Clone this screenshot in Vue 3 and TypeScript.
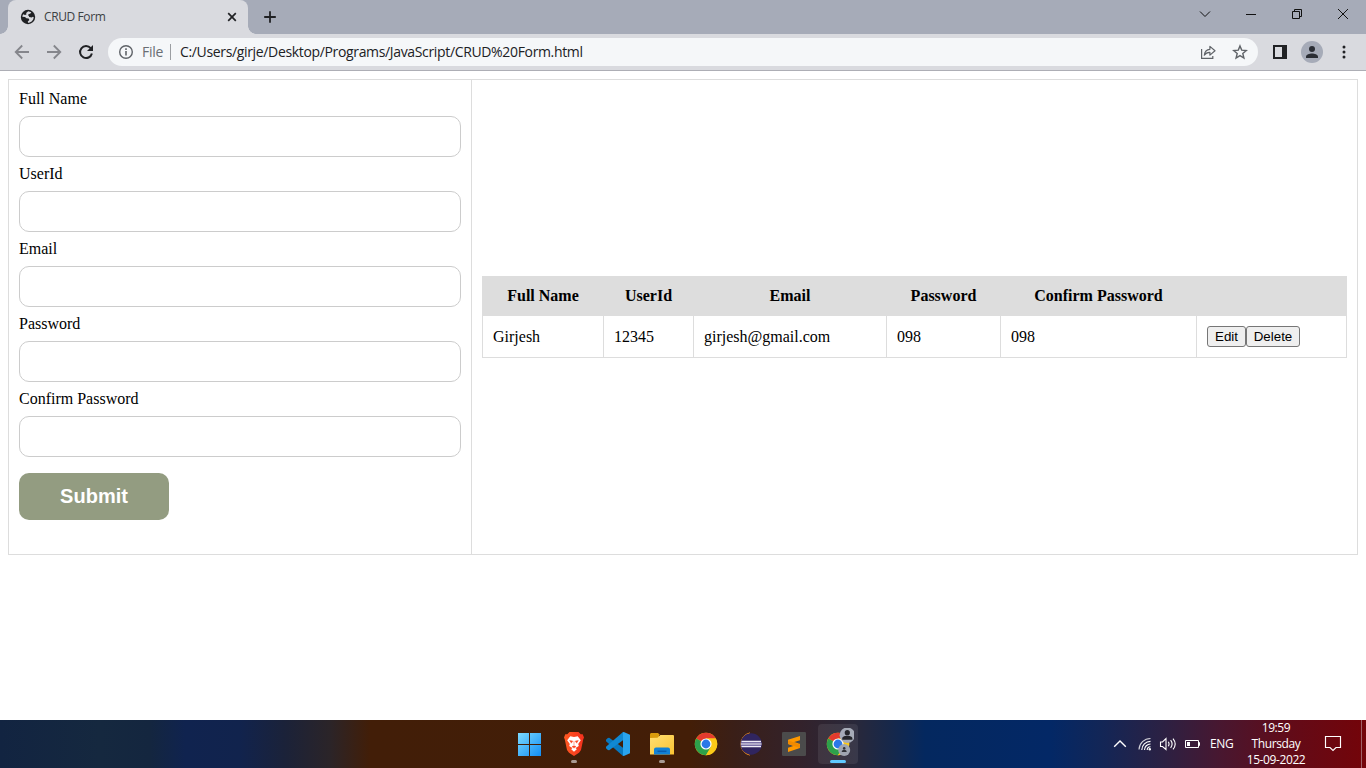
<script setup lang="ts">
interface Field { id: string; label: string; key: keyof Person }
interface Person { fullName: string; userId: string; email: string; password: string; confirm: string }

const fields: Field[] = [
  { id: 'full-name', label: 'Full Name', key: 'fullName' },
  { id: 'user-id', label: 'UserId', key: 'userId' },
  { id: 'email', label: 'Email', key: 'email' },
  { id: 'password', label: 'Password', key: 'password' },
  { id: 'confirm', label: 'Confirm Password', key: 'confirm' },
]
const people: Person[] = [
  { fullName: 'Girjesh', userId: '12345', email: 'girjesh@gmail.com', password: '098', confirm: '098' },
]
</script>

<template>
  <div class="screen">
    <header class="tabs">
      <div class="tab">
        <svg class="favicon" width="16" height="16" viewBox="0 0 16 16">
          <circle cx="8" cy="8" r="7.200" fill="#202124" />
          <path d="M8.200 2.300L11.300 3.200 10.400 4.800 8.800 5 8.200 6.600 9.800 7.600 12 7 13.700 8.200C13.500 11.200 11 13.700 8 13.700L7.800 12.600 9.400 11 8.600 9.600 6.400 9.300 5 8 2.300 7.800C2.400 6.800 2.700 5.900 3.200 5.200L5 6 6.400 5.400 6.200 4Z" fill="#d9dadf" />
          <path d="M8.600 5.200l2.800-.6 2 2.600-1.600 1.200-2.600-.4Z" fill="#202124" />
        </svg>
        <span class="tab-title">CRUD Form</span>
        <svg width="16" height="16" viewBox="0 0 16 16" fill="none" stroke="#202124" stroke-width="1.700"><path d="M4.200 4.200l7.600 7.600M11.800 4.200l-7.600 7.600" /></svg>
      </div>
      <svg class="plus" width="16" height="16" viewBox="0 0 16 16" fill="none" stroke="#202124" stroke-width="1.800"><path d="M8 2.200v11.600M2.200 8h11.600" /></svg>
      <div class="window-controls">
        <span><svg width="12" height="12" viewBox="0 0 12 12"><path d="M1 3.500l5 5 5-5" /></svg></span>
        <span><svg width="12" height="12" viewBox="0 0 12 12"><path d="M1 6.500h10" /></svg></span>
        <span><svg width="12" height="12" viewBox="0 0 12 12"><path d="M1.500 3.500h7v7h-7zM3.500 3.500v-2h7v7h-2" /></svg></span>
        <span><svg width="12" height="12" viewBox="0 0 12 12"><path d="M1 1l10 10M11 1L1 11" /></svg></span>
      </div>
    </header>

    <nav class="toolbar">
      <svg width="16" height="16" viewBox="0 0 16 16" fill="none" stroke="#85868c" stroke-width="1.800"><path d="M15 8H2M8.200 1.500L1.700 8l6.500 6.500" /></svg>
      <svg width="16" height="16" viewBox="0 0 16 16" fill="none" stroke="#85868c" stroke-width="1.800"><path d="M1 8h13M7.800 1.500L14.300 8l-6.500 6.500" /></svg>
      <svg width="16" height="16" viewBox="0 0 16 16"><path d="M12.700 4.200A6 6 0 1 0 13.900 9.500" fill="none" stroke="#202124" stroke-width="2" /><path d="M15 1v6H9Z" fill="#202124" /></svg>
      <div class="address">
        <svg width="16" height="16" viewBox="0 0 16 16"><circle cx="8" cy="8" r="6.300" fill="none" stroke="#5f6368" stroke-width="1.400" /><path d="M7.200 7h1.600v4.500H7.200zM7.200 4.300h1.600v1.600H7.200z" fill="#5f6368" /></svg>
        <span class="scheme">File</span>
        <i class="rule"></i>
        <span class="url">C:/Users/girje/Desktop/Programs/JavaScript/CRUD%20Form.html</span>
        <svg class="share" width="16" height="16" viewBox="0 0 16 16" fill="none" stroke="#5f6368" stroke-width="1.200"><path d="M1.600 5v9.400h11.200v-2.500" /><path d="M4.300 11.200C4.700 7.700 6.700 5.500 9.900 5.300V2.400L15 6.800l-5.100 4.300V8.300C7.600 8.200 5.700 9.100 4.300 11.200Z" stroke-linejoin="round" /></svg>
        <svg width="16" height="16" viewBox="0 0 16 16" fill="none" stroke="#5f6368" stroke-width="1.400"><path d="M8 1.900l1.700 4.200 4.600.4-3.500 3 1.100 4.500L8 11.600 4.100 14l1.100-4.500-3.500-3 4.600-.4Z" /></svg>
      </div>
      <svg class="panel-icon" width="16" height="16" viewBox="0 0 16 16"><path d="M1 1h14v14H1zM3 3v10h7V3z" fill="#202124" fill-rule="evenodd" /></svg>
      <svg class="avatar" width="22" height="22" viewBox="0 0 22 22"><circle cx="11" cy="11" r="11" fill="#a6abb8" /><circle cx="11" cy="8" r="3" fill="#2b2e35" /><path d="M5 17v-1.400c0-2.200 3.500-3.200 6-3.200s6 1 6 3.200V17Z" fill="#2b2e35" /></svg>
      <svg class="dots" width="4" height="16" viewBox="0 0 4 16" fill="#202124"><circle cx="2" cy="3" r="1.500" /><circle cx="2" cy="8" r="1.500" /><circle cx="2" cy="13" r="1.500" /></svg>
    </nav>

    <main class="page">
      <form class="entry" @submit.prevent>
        <template v-for="f in fields" :key="f.id">
          <label :for="f.id">{{ f.label }}</label>
          <input :id="f.id" type="text" />
        </template>
        <button class="submit" type="submit">Submit</button>
      </form>
      <section class="records">
        <table>
          <colgroup><col class="c1" /><col class="c2" /><col class="c3" /><col class="c4" /><col class="c5" /><col class="c6" /></colgroup>
          <thead><tr><th v-for="f in fields" :key="f.id">{{ f.label }}</th><th></th></tr></thead>
          <tbody>
            <tr v-for="p in people" :key="p.userId">
              <td v-for="f in fields" :key="f.id">{{ p[f.key] }}</td>
              <td><div class="actions"><button class="edit">Edit</button><button class="delete">Delete</button></div></td>
            </tr>
          </tbody>
        </table>
      </section>
    </main>

    <footer class="taskbar">
      <div class="apps">
        <span class="app">
          <svg width="24" height="24" viewBox="0 0 24 24">
            <defs><linearGradient id="win" x1="0" y1="0" x2="24" y2="24" gradientUnits="userSpaceOnUse"><stop offset="0" stop-color="#7fdcff" /><stop offset="1" stop-color="#0f8cf4" /></linearGradient></defs>
            <path d="M0 1h11v11H0zM12 1h11v11H12zM0 13h11v11H0zM12 13h11v11H12z" fill="url(#win)" />
          </svg>
        </span>
        <span class="app open">
          <svg width="24" height="24" viewBox="0 0 24 24">
            <defs><linearGradient id="lion" x1="0" x2="1"><stop offset="0" stop-color="#ff5a22" /><stop offset="1" stop-color="#f5301d" /></linearGradient></defs>
            <path d="M7.500 0h9l2.200 2.300 2-.1L22 5.500l-.8 2L19 18l-2 2.700-5 3.200-5-3.200L5 18 2.800 7.500 2 5.500l1.300-3.300 2 .1Z" fill="url(#lion)" />
            <path d="M8.300 4.300l3.700.6 3.700-.6 3.100 3.900-2.600 3.900.6 2-3.200 2 1.200 1.200L12 19.800l-2.800-2.500 1.200-1.200-3.200-2 .6-2-2.600-3.900Z" fill="#fff" />
            <path d="M7.500 8.600l3.200.5-1.500 2.200M16.500 8.600l-3.200.5 1.500 2.200M12 9v4M10 14.600l2-.8 2 .8-2 1.500Z" fill="#fb4825" stroke="#fb4825" stroke-width=".5" />
          </svg>
        </span>
        <span class="app">
          <svg width="24" height="24" viewBox="0 0 24 24">
            <path d="M1.800 6L0 7.800v1.400l17 14.700 1-.2v-7.200L3.200 5.800Z" fill="#0878bf" />
            <path d="M1.800 18L0 16.200v-1.400L17 .1l1 .2v7.200L3.200 18.200Z" fill="#1088d2" />
            <path d="M17.800 0L24 2.800v18.400L17.800 24c-.7 0-.8-.4-.8-.9V.9c0-.5.200-.9.800-.9Z" fill="#29a4ee" />
          </svg>
        </span>
        <span class="app open">
          <svg width="24" height="24" viewBox="0 0 24 24">
            <defs><linearGradient id="fold" x1="0" y1="0" x2="1" y2="1"><stop offset="0" stop-color="#ffdf73" /><stop offset="1" stop-color="#fac332" /></linearGradient></defs>
            <path d="M0 2.500c0-.8.600-1.500 1.500-1.500H8l2 2h-1v3H0Z" fill="#d89b0c" />
            <path d="M0 6l7.500-.2L10.300 3H23a1 1 0 0 1 1 1v18.500H0Z" fill="url(#fold)" />
            <path d="M4 22.500v-5a2 2 0 0 1 2-2h12a2 2 0 0 1 2 2v5Z" fill="#1181d5" /><path d="M7.500 19.300h9" stroke="#075cae" stroke-width="1.500" />
          </svg>
        </span>
        <span class="app">
          <svg width="24" height="24" viewBox="0 0 24 24">
            <g id="browser-mark">
              <circle cx="12" cy="12" r="11.200" fill="#fbc918" />
              <path d="M12 12L2.300 6.400A11.200 11.200 0 0 1 21.700 6.400L12 6.400Z" fill="#e33b2e" />
              <path d="M12 12L2.300 6.400A11.200 11.200 0 0 0 12 23.200L17 14.800Z" fill="#2da14b" />
              <path d="M12 12V6.400H21.700A11.200 11.200 0 0 1 12 23.200L17 14.800Z" fill="#fbc918" />
              <circle cx="12" cy="12" r="5.600" fill="#fff" /><circle cx="12" cy="12" r="4.400" fill="#2b78e8" />
            </g>
          </svg>
        </span>
        <span class="app">
          <svg width="24" height="24" viewBox="0 0 24 24">
            <path d="M11.500 1A11.300 11.300 0 0 0 11.500 23 14 14 0 0 1 11.500 1Z" fill="#f79318" stroke="#f79318" />
            <circle cx="13.200" cy="12" r="10.700" fill="#30255f" />
            <path d="M3.400 9.500h19.600M2.900 12h20.600M3.400 14.500h19.600" stroke="#f0edf7" stroke-width="1.400" /><path d="M3.100 10.750h20.200M3.100 13.250h20.200" stroke="#857bb3" stroke-width="1.100" />
          </svg>
        </span>
        <span class="app">
          <svg width="24" height="24" viewBox="0 0 24 24">
            <rect width="24" height="24" rx="1.300" fill="#4b4b4b" />
            <path d="M18 4v4.200L6 12V7.800ZM6 7.800L18 12v4.200L6 12ZM18 11.700V16L6 20v-4.200Z" fill="#ff9800" /><path d="M6 8.200v3.700l12 4.100v-3.500l-6.500-2.200" fill="#f18a00" />
          </svg>
        </span>
        <span class="app active">
          <svg width="32" height="32" viewBox="0 0 32 32">
            <use href="#browser-mark" x="4" y="4" />
            <circle cx="25.300" cy="7.200" r="7.700" fill="#a6abb8" /><circle cx="25.300" cy="4.700" r="2.600" fill="#25262b" /><path d="M20.200 11.800V10.400c0-1.900 2.800-2.700 5.100-2.700s5.100.8 5.100 2.700v1.400Z" fill="#25262b" />
            <circle cx="22.200" cy="22" r="6" fill="#9fa5b1" /><circle cx="22.200" cy="20.400" r="1.300" fill="#303238" /><path d="M19.800 24v-.8c0-.8 1.200-1.200 2.400-1.200s2.400.4 2.400 1.200v.8Z" fill="#303238" />
          </svg>
        </span>
      </div>

      <div class="tray">
        <svg class="up" width="14" height="14" viewBox="0 0 14 14" fill="none" stroke="#fff" stroke-width="1.400"><path d="M1.200 9.800L7 4l5.800 5.800" /></svg>
        <svg class="wifi" width="14" height="14" viewBox="0 0 14 14" fill="none" stroke="#fff" stroke-width="1.150"><path d="M1 12.500A11.500 11.500 0 0 1 12.500 1.500" opacity=".8" /><path d="M3.800 13A8.700 8.700 0 0 1 12.500 4.300M6.500 13A6 6 0 0 1 12.500 7M9.200 13A3.300 3.300 0 0 1 12.500 9.700" /><circle cx="11.800" cy="12.300" r="1.200" fill="#fff" stroke="none" /></svg>
        <svg class="sound" width="18" height="14" viewBox="0 0 18 14" fill="none" stroke="#fff" stroke-width="1.100"><path d="M1.500 5h2L7 1.500v11L3.500 9.500h-2ZM9.300 4.800q1.500 2.200 0 4.400M11.600 3.200q3 3.800 0 7.600M14 1.600q4.400 5.400 0 10.800" /></svg>
        <svg class="battery" width="16" height="10" viewBox="0 0 16 10"><path d="M.5 1.500h13v7H.5ZM13.500 3.500h1v3h-1" fill="none" stroke="#fff" /><path d="M2 3h3v4H2z" fill="#fff" /></svg>
        <span class="lang">ENG</span>
        <div class="clock"><span>19:59</span><span>Thursday</span><span>15-09-2022</span></div>
        <svg class="note" width="18" height="18" viewBox="0 0 18 18" fill="none" stroke="#fff" stroke-width="1.150"><path d="M1.500 1.500h15v11h-4.500l-3 3-3-3H1.500Z" /></svg>
        <i class="edge"></i>
      </div>
    </footer>
  </div>
</template>

<style>
body { margin: 0; background: #fff; }
</style>

<style scoped>
* { box-sizing: border-box; }
svg { display: block; flex: none; }
.screen { width: 1366px; height: 768px; display: flex; flex-direction: column; overflow: hidden; background: #fff; font: 12px/16px "Open Sans", "Noto Sans", sans-serif; }

.tabs { height: 34px; display: flex; background: #a6abb8; padding-left: 8px; flex: none; }
.tab { position: relative; width: 240px; display: flex; align-items: center; background: #d9dadf; border-radius: 8px 8px 0 0; padding: 0 8px 0 12px; color: #3c4043; }
.tab::before, .tab::after { content: ""; position: absolute; bottom: 0; width: 8px; height: 8px; }
.tab::before { left: -8px; background: radial-gradient(circle at 0 0, #a6abb8 7.500px, #d9dadf 8px); }
.tab::after { right: -8px; background: radial-gradient(circle at 100% 0, #a6abb8 7.500px, #d9dadf 8px); }
.tab-title { flex: 1; margin-left: 8px; letter-spacing: -.4px; }
.plus { margin: 9px 0 0 14px; }
.window-controls { display: flex; margin-left: auto; height: 28px; }
.window-controls span { width: 46px; display: grid; place-items: center; }
.window-controls svg { fill: none; stroke: #111; stroke-width: 1; }

.toolbar { height: 37px; display: flex; align-items: center; flex: none; padding: 0 0 0 14px; background: #d9dadf; border-bottom: 1px solid #adaeb5; gap: 16px; }
.address { width: 1150px; height: 28px; margin-left: -2px; border-radius: 14px; padding: 0 10px; display: flex; align-items: center; background: #f5f7f9; font-size: 14px; }
.scheme { width: 28px; margin-left: 8px; color: #6a6e73; letter-spacing: -.3px; }
.rule { width: 1px; height: 16px; background: #9b9ea2; }
.url { margin-left: 9px; color: #202124; white-space: nowrap; letter-spacing: -.345px; }
.share { margin: 0 16px 0 auto; }
.panel-icon { margin-left: -2px; }
.avatar { margin-left: -3px; }
.dots { margin-left: 3px; }

.page { height: 476px; display: grid; grid-template-columns: 463px 1fr; margin: 8px 8px 0; border: 1px solid #ddd; font: 16px/18px "Liberation Serif", "Times New Roman", serif; flex: none; color: #000; }
.entry { display: flex; flex-direction: column; padding: 10px; border-right: 1px solid #ddd; }
.entry label { height: 18px; }
.entry input { width: 442px; height: 41px; margin: 8px 0; border: 1px solid #ccc; border-radius: 10px; outline: none; background: #fff; }
.submit { width: 150px; height: 47px; margin-top: 8px; padding: 0 0 2px; border: 0; border-radius: 10px; background: #939c81; color: #fff; font: bold 20px/22px "Liberation Sans", Arial, sans-serif; }
.records { display: flex; align-items: center; padding: 0 10px; }
table { width: 865px; table-layout: fixed; border-collapse: collapse; }
.c1 { width: 121px; } .c2 { width: 90px; } .c3 { width: 193px; } .c4 { width: 114px; } .c5 { width: 196px; } .c6 { width: 150px; }
th { height: 39px; padding: 0; background: #ddd; border: 1px solid #ddd; font-weight: bold; }
td { height: 42px; padding: 0 10px; border: 1px solid #ddd; }
.actions { display: flex; }
.actions button { height: 21px; padding: 0; border: 1px solid #767676; border-radius: 3px; background: #efefef; color: #000; font: 13.333px/15px "Liberation Sans", Arial, sans-serif; }
.actions .edit { width: 39px; }
.actions .delete { width: 54px; }

.taskbar { height: 48px; margin-top: auto; flex: none; display: flex; justify-content: space-between; color: #fff;
  background: linear-gradient(90deg, #122441 0, #15283f 100px, #14263f 150px, #10234f 185px, #11234d 240px, #1b2239 285px, #2b2428 330px, #421e08 370px, #431e07 690px, #3a1f18 735px, #33222b 800px, #29283a 855px, #17284a 890px, #04285f 925px, #032866 1050px, #122657 1100px, #2a2144 1160px, #481730 1220px, #620b18 1290px, #740409 1366px); }
.apps { display: flex; gap: 4px; padding: 4px 0 0 510px; }
.app { position: relative; width: 40px; height: 40px; display: flex; align-items: center; justify-content: center; border-radius: 4px; }
.app svg { margin-left: -1px; }
.active { background: rgba(255, 255, 255, .08); }
.open::after, .active::after { content: ""; position: absolute; bottom: 1px; left: 17px; width: 6px; height: 3px; border-radius: 2px; background: #a99b94; }
.active::after { left: 12px; width: 16px; background: #5fc9ff; }
.tray { display: flex; align-items: center; }
.wifi { margin-left: 11px; }
.sound { margin-left: 7px; }
.battery { margin-left: 8px; }
.lang { width: 24px; margin-left: 9px; letter-spacing: -.4px; }
.clock { width: 70px; margin-left: 7px; display: flex; flex-direction: column; text-align: center; letter-spacing: -.4px; }
.note { margin-left: 13px; }
.edge { width: 1px; height: 48px; margin: 0 4px 0 19px; background: #a06066; }
</style>
